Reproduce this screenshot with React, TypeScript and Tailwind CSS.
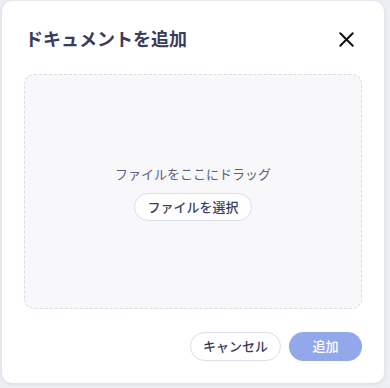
import { X } from 'lucide-react';

const font = { fontFamily: '"Inter", "Noto Sans CJK JP", sans-serif' };

export default function App() {
  return (
    <div className="w-[390px] h-[388px] bg-[#eceef4] pl-[2px] pt-[1px]" style={font}>
      <div className="w-[382px] h-[382px] bg-white rounded-[10px] shadow-[0_1px_4px_rgba(60,70,110,0.12)] px-[22px] pt-[22px] pb-[21px] flex flex-col">
        <div className="h-[32px] flex items-center justify-between">
          <h2 className="text-[18px] font-bold text-[#383d5c] pl-[1px]">ドキュメントを追加</h2>
          <button className="w-[32px] h-[32px] flex items-center justify-center text-[#111]">
            <X size={25} strokeWidth={1.9} />
          </button>
        </div>

        <div className="mt-[19px] h-[235px] border border-dashed border-[#d9dbe6] rounded-[10px] bg-[#f8f8fb] flex flex-col items-center justify-center gap-[9px] pt-[3px]">
          <p className="text-[13px] text-[#5b6080]">ファイルをここにドラッグ</p>
          <button className="h-[28px] px-[12px] rounded-full border border-[#dcdee9] bg-white text-[13px] font-medium text-[#3a3f5c]">
            ファイルを選択
          </button>
        </div>

        <div className="mt-[23px] flex justify-end gap-[8px]">
          <button className="h-[29px] w-[91px] rounded-full border border-[#dcdee9] bg-white text-[13px] font-medium text-[#383d5c]">
            キャンセル
          </button>
          <button className="h-[29px] w-[73px] rounded-full bg-[#93a8ea] text-[13px] font-medium text-white">
            追加
          </button>
        </div>
      </div>
    </div>
  );
}
